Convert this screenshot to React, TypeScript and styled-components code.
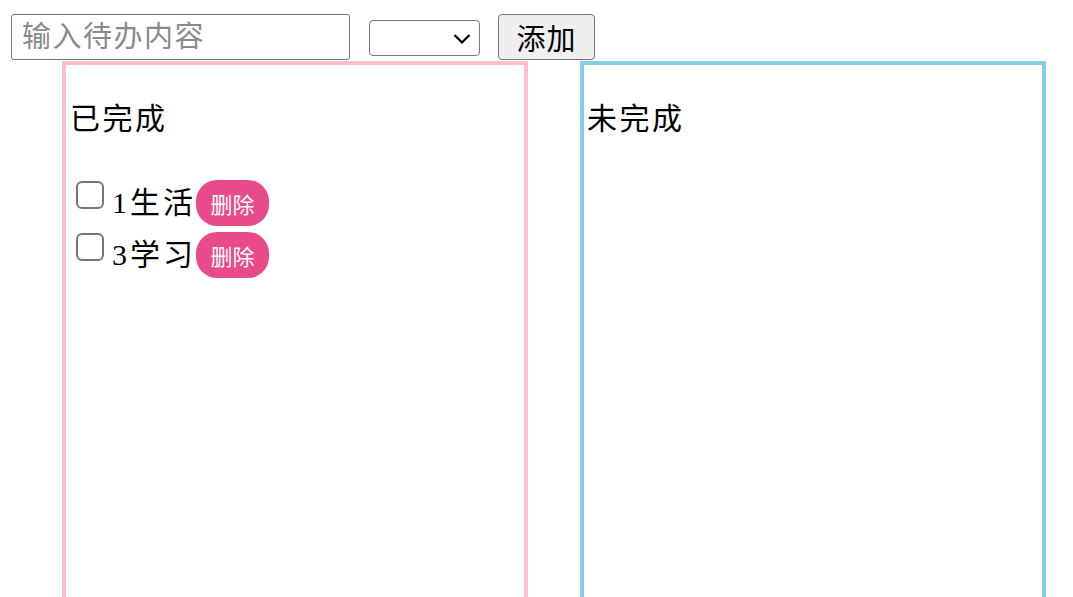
import React, { useState } from 'react'
import styled, { createGlobalStyle } from 'styled-components'

const GlobalStyle = createGlobalStyle`
  html, body {
    margin: 0;
    padding: 0;
    background: #fff;
    overflow: hidden;
  }
  body {
    font-family: "Liberation Serif", "Noto Sans CJK SC", serif;
    color: #000;
  }
`

interface Todo {
  id: number
  text: string
  done: boolean
}

export default function App() {
  const [todos, setTodos] = useState<Todo[]>([
    { id: 1, text: '1生活', done: true },
    { id: 3, text: '3学习', done: true },
  ])
  const [value, setValue] = useState('')

  function addTodo() {
    if (value !== '') {
      setTodos([...todos, { id: Date.now(), text: value, done: false }])
      setValue('')
    }
  }

  function remove(id: number) {
    setTodos(todos.filter(t => t.id !== id))
  }

  const done = todos.filter(t => t.done)
  const undone = todos.filter(t => !t.done)

  return (
    <>
      <GlobalStyle />
      <Page>
        <Toolbar>
          <TextInput
            placeholder="输入待办内容"
            value={value}
            onChange={e => setValue(e.target.value)}
          />
          <SelectWrap>
            <Select>
              <option value=""></option>
            </Select>
            <Chevron width="18" height="12" viewBox="0 0 18 12">
              <path d="M1.5 2 L9 9.5 L16.5 2" fill="none" stroke="#000" strokeWidth="2.2" />
            </Chevron>
          </SelectWrap>
          <AddButton onClick={addTodo}>添加</AddButton>
        </Toolbar>
        <Columns>
          <Column $color="pink">
            <Heading $indent={4}>已完成</Heading>
            <List>
              {done.map(t => (
                <Row key={t.id}>
                  <Check type="checkbox" />
                  <ItemText>{t.text}</ItemText>
                  <DeleteButton onClick={() => remove(t.id)}>删除</DeleteButton>
                </Row>
              ))}
            </List>
          </Column>
          <Column $color="skyblue">
            <Heading $indent={3}>未完成</Heading>
            <List>
              {undone.map(t => (
                <Row key={t.id}>
                  <Check type="checkbox" />
                  <ItemText>{t.text}</ItemText>
                  <DeleteButton onClick={() => remove(t.id)}>删除</DeleteButton>
                </Row>
              ))}
            </List>
          </Column>
        </Columns>
      </Page>
    </>
  )
}

const Page = styled.div`
  width: 1073px;
  height: 597px;
  overflow: hidden;
`

const Toolbar = styled.div`
  display: flex;
  align-items: flex-start;
  padding: 14px 0 0 11px;
  box-sizing: border-box;
  height: 61px;
`

const TextInput = styled.input`
  box-sizing: border-box;
  width: 339px;
  height: 46px;
  border: 1px solid #767676;
  border-radius: 3px;
  padding: 0 0 0 10px;
  font-family: "Liberation Serif", "Noto Sans CJK SC", serif;
  font-size: 29px;
  letter-spacing: 1.5px;
  outline: none;
  &::placeholder {
    color: #8a8a8a;
  }
`

const SelectWrap = styled.div`
  position: relative;
  margin: 6px 0 0 19px;
  width: 111px;
  height: 36px;
`

const Select = styled.select`
  appearance: none;
  box-sizing: border-box;
  width: 111px;
  height: 36px;
  border: 1px solid #767676;
  border-radius: 4px;
  background: #fff;
  font-size: 20px;
`

const Chevron = styled.svg`
  position: absolute;
  right: 9px;
  top: 13px;
  pointer-events: none;
`

const AddButton = styled.button`
  box-sizing: border-box;
  margin-left: 18px;
  width: 97px;
  height: 46px;
  border: 1px solid #767676;
  border-radius: 4px;
  background: #efefef;
  font-family: "Liberation Serif", "Noto Sans CJK SC", serif;
  font-size: 29px;
  color: #000;
  padding: 0;
  letter-spacing: 1px;
`

const Columns = styled.div`
  display: flex;
  gap: 52px;
  padding-left: 62px;
`

const Column = styled.div<{ $color: string }>`
  box-sizing: border-box;
  width: 466px;
  height: 600px;
  border: 4px solid ${p => p.$color};
  border-bottom: none;
`

const Heading = styled.div<{ $indent: number }>`
  margin-top: 34px;
  padding-left: ${p => p.$indent}px;
  font-size: 30px;
  line-height: 40px;
  letter-spacing: 2.5px;
`

const List = styled.div`
  display: flex;
  flex-direction: column;
  gap: 6px;
  margin-top: 41px;
  padding-left: 10px;
`

const Row = styled.div`
  display: flex;
  align-items: center;
  height: 46px;
`

const Check = styled.input`
  appearance: none;
  box-sizing: border-box;
  width: 28px;
  height: 28px;
  margin: 1px 8px 0 0;
  align-self: flex-start;
  border: 2px solid #767676;
  border-radius: 6px;
  background: #fff;
`

const ItemText = styled.span`
  font-size: 30px;
  line-height: 46px;
  letter-spacing: 3px;
`

const DeleteButton = styled.button`
  box-sizing: border-box;
  margin-left: 0;
  width: 73px;
  height: 46px;
  border: none;
  border-radius: 21px;
  background: #e94b8a;
  color: #fff;
  font-family: "Noto Sans CJK SC", sans-serif;
  font-size: 22px;
  padding: 0;
`
